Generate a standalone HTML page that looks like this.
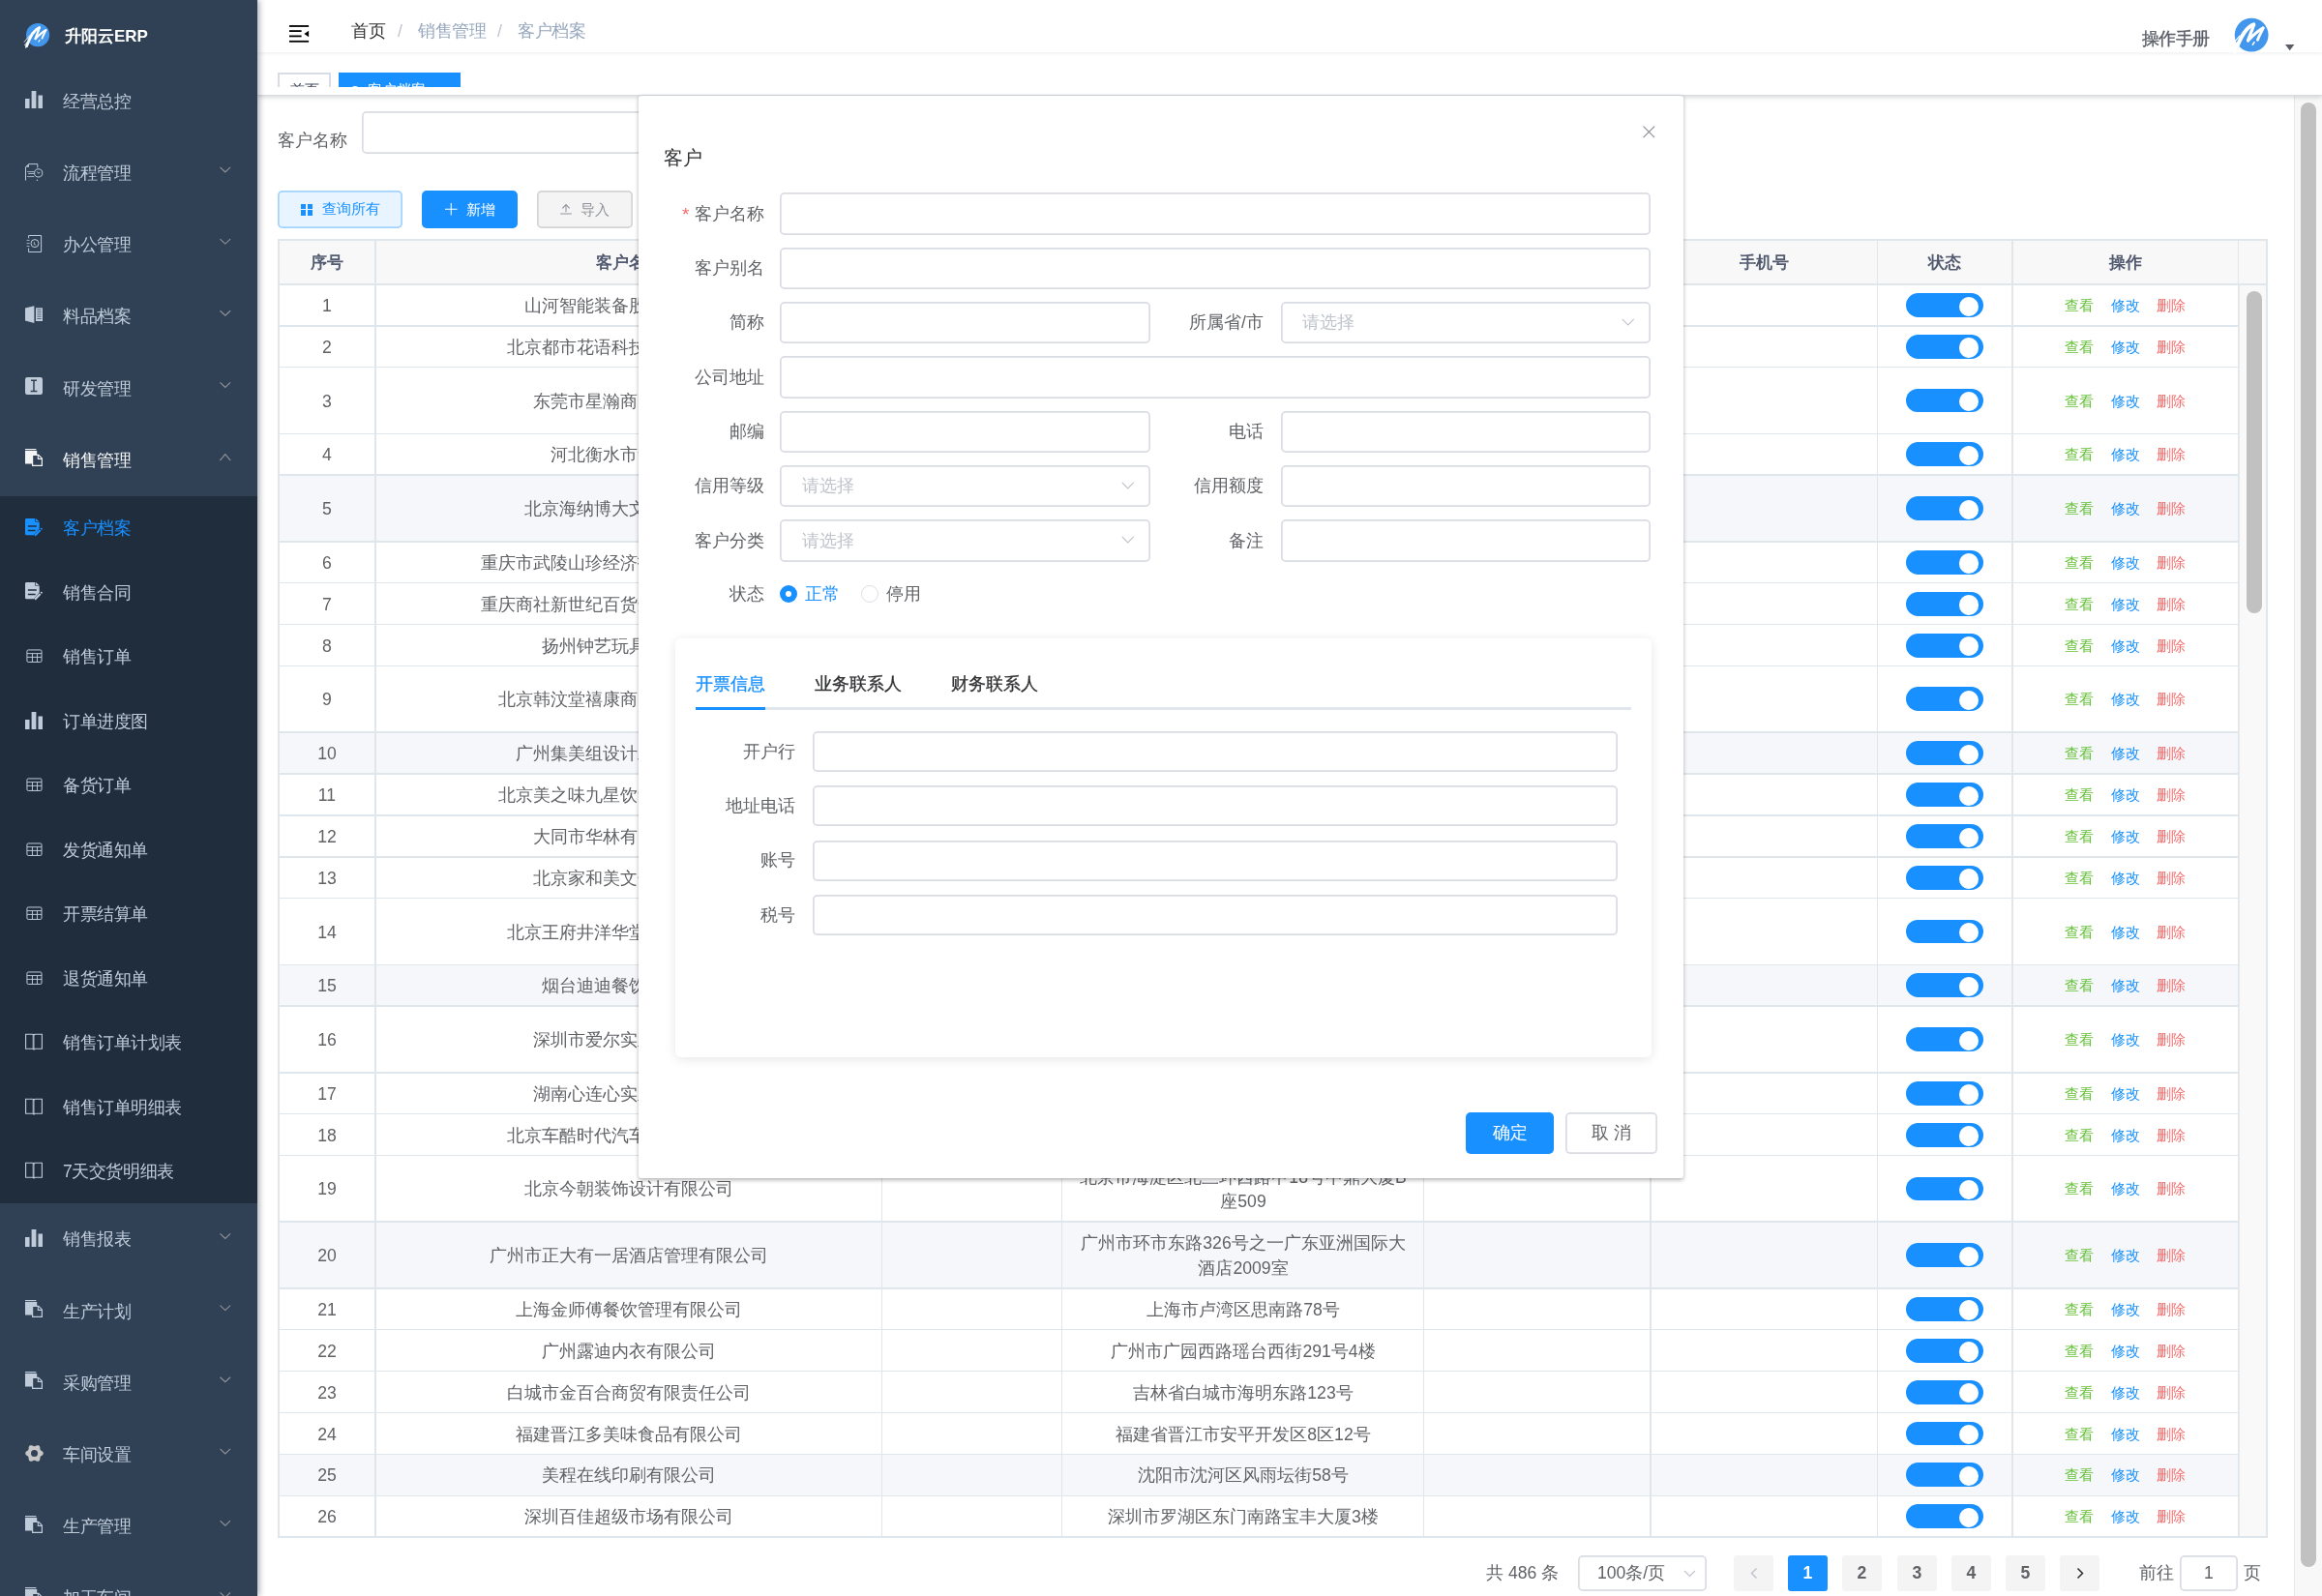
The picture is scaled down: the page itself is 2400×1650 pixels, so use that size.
<!DOCTYPE html><html><head><meta charset="utf-8"><style>
html,body{margin:0;padding:0;width:2400px;height:1650px;overflow:hidden;background:#fff;font-family:"Liberation Sans",sans-serif;}
.t{position:absolute;white-space:nowrap;will-change:transform;}
.b{position:absolute;box-sizing:border-box;}
svg{position:absolute;overflow:visible;}
</style></head><body>

<div class="b" style="left:266.00px;top:0.00px;width:2134.00px;height:1650.00px;background:#fff"></div>
<div class="b" style="left:288.00px;top:248.00px;width:2055.00px;height:45.90px;background:#f8f8f9"></div>
<div class="b" style="left:288.00px;top:491.20px;width:2025.50px;height:68.60px;background:#f5f7fa"></div>
<div class="b" style="left:288.00px;top:757.10px;width:2025.50px;height:42.90px;background:#f5f7fa"></div>
<div class="b" style="left:288.00px;top:997.30px;width:2025.50px;height:42.90px;background:#f5f7fa"></div>
<div class="b" style="left:288.00px;top:1263.20px;width:2025.50px;height:68.60px;background:#f5f7fa"></div>
<div class="b" style="left:288.00px;top:1503.40px;width:2025.50px;height:42.90px;background:#f5f7fa"></div>
<div class="b" style="left:2313.50px;top:293.90px;width:29.50px;height:1295.30px;background:#f9f9f9;border-left:1px solid #e8e8e8"></div>
<div class="b" style="left:2322.00px;top:300.70px;width:16.00px;height:333.00px;background:#c1c1c1;border-radius:8px"></div>
<div class="b" style="left:287.20px;top:247.20px;width:2056.60px;height:1.60px;background:#dfe6ec"></div>
<div class="b" style="left:287.20px;top:293.10px;width:2056.60px;height:1.60px;background:#dfe6ec"></div>
<div class="b" style="left:287.20px;top:336.00px;width:2027.10px;height:1.60px;background:#dfe6ec"></div>
<div class="b" style="left:287.20px;top:378.90px;width:2027.10px;height:1.60px;background:#dfe6ec"></div>
<div class="b" style="left:287.20px;top:447.50px;width:2027.10px;height:1.60px;background:#dfe6ec"></div>
<div class="b" style="left:287.20px;top:490.40px;width:2027.10px;height:1.60px;background:#dfe6ec"></div>
<div class="b" style="left:287.20px;top:559.00px;width:2027.10px;height:1.60px;background:#dfe6ec"></div>
<div class="b" style="left:287.20px;top:601.90px;width:2027.10px;height:1.60px;background:#dfe6ec"></div>
<div class="b" style="left:287.20px;top:644.80px;width:2027.10px;height:1.60px;background:#dfe6ec"></div>
<div class="b" style="left:287.20px;top:687.70px;width:2027.10px;height:1.60px;background:#dfe6ec"></div>
<div class="b" style="left:287.20px;top:756.30px;width:2027.10px;height:1.60px;background:#dfe6ec"></div>
<div class="b" style="left:287.20px;top:799.20px;width:2027.10px;height:1.60px;background:#dfe6ec"></div>
<div class="b" style="left:287.20px;top:842.10px;width:2027.10px;height:1.60px;background:#dfe6ec"></div>
<div class="b" style="left:287.20px;top:885.00px;width:2027.10px;height:1.60px;background:#dfe6ec"></div>
<div class="b" style="left:287.20px;top:927.90px;width:2027.10px;height:1.60px;background:#dfe6ec"></div>
<div class="b" style="left:287.20px;top:996.50px;width:2027.10px;height:1.60px;background:#dfe6ec"></div>
<div class="b" style="left:287.20px;top:1039.40px;width:2027.10px;height:1.60px;background:#dfe6ec"></div>
<div class="b" style="left:287.20px;top:1108.00px;width:2027.10px;height:1.60px;background:#dfe6ec"></div>
<div class="b" style="left:287.20px;top:1150.90px;width:2027.10px;height:1.60px;background:#dfe6ec"></div>
<div class="b" style="left:287.20px;top:1193.80px;width:2027.10px;height:1.60px;background:#dfe6ec"></div>
<div class="b" style="left:287.20px;top:1262.40px;width:2027.10px;height:1.60px;background:#dfe6ec"></div>
<div class="b" style="left:287.20px;top:1331.00px;width:2027.10px;height:1.60px;background:#dfe6ec"></div>
<div class="b" style="left:287.20px;top:1373.90px;width:2027.10px;height:1.60px;background:#dfe6ec"></div>
<div class="b" style="left:287.20px;top:1416.80px;width:2027.10px;height:1.60px;background:#dfe6ec"></div>
<div class="b" style="left:287.20px;top:1459.70px;width:2027.10px;height:1.60px;background:#dfe6ec"></div>
<div class="b" style="left:287.20px;top:1502.60px;width:2027.10px;height:1.60px;background:#dfe6ec"></div>
<div class="b" style="left:287.20px;top:1545.50px;width:2027.10px;height:1.60px;background:#dfe6ec"></div>
<div class="b" style="left:287.20px;top:1588.40px;width:2056.60px;height:1.60px;background:#dfe6ec"></div>
<div class="b" style="left:287.20px;top:247.20px;width:1.60px;height:1342.80px;background:#dfe6ec"></div>
<div class="b" style="left:387.20px;top:247.20px;width:1.60px;height:1342.80px;background:#dfe6ec"></div>
<div class="b" style="left:910.90px;top:247.20px;width:1.60px;height:1342.80px;background:#dfe6ec"></div>
<div class="b" style="left:1096.90px;top:247.20px;width:1.60px;height:1342.80px;background:#dfe6ec"></div>
<div class="b" style="left:1470.50px;top:247.20px;width:1.60px;height:1342.80px;background:#dfe6ec"></div>
<div class="b" style="left:1705.00px;top:247.20px;width:1.60px;height:1342.80px;background:#dfe6ec"></div>
<div class="b" style="left:1939.50px;top:247.20px;width:1.60px;height:1342.80px;background:#dfe6ec"></div>
<div class="b" style="left:2079.20px;top:247.20px;width:1.60px;height:1342.80px;background:#dfe6ec"></div>
<div class="b" style="left:2312.70px;top:247.20px;width:1.60px;height:1342.80px;background:#dfe6ec"></div>
<div class="b" style="left:2342.20px;top:247.20px;width:1.60px;height:1342.80px;background:#dfe6ec"></div>
<div class="t" style="left:288.00px;width:100px;text-align:center;top:255.75px;font-size:17.25px;line-height:30px;color:#515a6e;font-weight:bold;">序号</div>
<div class="t" style="left:449.85px;width:400px;text-align:center;top:255.75px;font-size:17.25px;line-height:30px;color:#515a6e;font-weight:bold;">客户名称</div>
<div class="t" style="left:1723.00px;width:200px;text-align:center;top:255.75px;font-size:17.25px;line-height:30px;color:#515a6e;font-weight:bold;">手机号</div>
<div class="t" style="left:1950.00px;width:120px;text-align:center;top:255.75px;font-size:17.25px;line-height:30px;color:#515a6e;font-weight:bold;">状态</div>
<div class="t" style="left:2096.75px;width:200px;text-align:center;top:255.75px;font-size:17.25px;line-height:30px;color:#515a6e;font-weight:bold;">操作</div>
<div class="t" style="left:288.00px;width:100px;text-align:center;top:300.90px;font-size:17.6px;line-height:30px;color:#606266;font-weight:normal;">1</div>
<div class="t" style="left:389.85px;width:520px;text-align:center;top:300.90px;font-size:17.6px;line-height:30px;color:#606266;font-weight:normal;">山河智能装备股份有限公司</div>
<div class="b" style="left:1970.00px;top:302.95px;width:79.90px;height:24.90px;background:#1890ff;border-radius:13px"></div>
<div class="b" style="left:2024.8px;top:306.55px;width:20.2px;height:20.2px;border-radius:10.1px;background:#fff"></div>
<div class="t" style="left:2134.00px;top:300.90px;font-size:15.25px;line-height:30px;color:#67c23a;font-weight:normal;">查看</div>
<div class="t" style="left:2181.50px;top:300.90px;font-size:15.25px;line-height:30px;color:#1890ff;font-weight:normal;">修改</div>
<div class="t" style="left:2229.00px;top:300.90px;font-size:15.25px;line-height:30px;color:#f56c6c;font-weight:normal;">删除</div>
<div class="t" style="left:288.00px;width:100px;text-align:center;top:343.80px;font-size:17.6px;line-height:30px;color:#606266;font-weight:normal;">2</div>
<div class="t" style="left:389.85px;width:520px;text-align:center;top:343.80px;font-size:17.6px;line-height:30px;color:#606266;font-weight:normal;">北京都市花语科技发展有限公司</div>
<div class="b" style="left:1970.00px;top:345.85px;width:79.90px;height:24.90px;background:#1890ff;border-radius:13px"></div>
<div class="b" style="left:2024.8px;top:349.45px;width:20.2px;height:20.2px;border-radius:10.1px;background:#fff"></div>
<div class="t" style="left:2134.00px;top:343.80px;font-size:15.25px;line-height:30px;color:#67c23a;font-weight:normal;">查看</div>
<div class="t" style="left:2181.50px;top:343.80px;font-size:15.25px;line-height:30px;color:#1890ff;font-weight:normal;">修改</div>
<div class="t" style="left:2229.00px;top:343.80px;font-size:15.25px;line-height:30px;color:#f56c6c;font-weight:normal;">删除</div>
<div class="t" style="left:288.00px;width:100px;text-align:center;top:399.55px;font-size:17.6px;line-height:30px;color:#606266;font-weight:normal;">3</div>
<div class="t" style="left:389.85px;width:520px;text-align:center;top:399.55px;font-size:17.6px;line-height:30px;color:#606266;font-weight:normal;">东莞市星瀚商贸有限公司</div>
<div class="b" style="left:1970.00px;top:401.60px;width:79.90px;height:24.90px;background:#1890ff;border-radius:13px"></div>
<div class="b" style="left:2024.8px;top:405.20px;width:20.2px;height:20.2px;border-radius:10.1px;background:#fff"></div>
<div class="t" style="left:2134.00px;top:399.55px;font-size:15.25px;line-height:30px;color:#67c23a;font-weight:normal;">查看</div>
<div class="t" style="left:2181.50px;top:399.55px;font-size:15.25px;line-height:30px;color:#1890ff;font-weight:normal;">修改</div>
<div class="t" style="left:2229.00px;top:399.55px;font-size:15.25px;line-height:30px;color:#f56c6c;font-weight:normal;">删除</div>
<div class="t" style="left:288.00px;width:100px;text-align:center;top:455.30px;font-size:17.6px;line-height:30px;color:#606266;font-weight:normal;">4</div>
<div class="t" style="left:389.85px;width:520px;text-align:center;top:455.30px;font-size:17.6px;line-height:30px;color:#606266;font-weight:normal;">河北衡水市食品公司</div>
<div class="b" style="left:1970.00px;top:457.35px;width:79.90px;height:24.90px;background:#1890ff;border-radius:13px"></div>
<div class="b" style="left:2024.8px;top:460.95px;width:20.2px;height:20.2px;border-radius:10.1px;background:#fff"></div>
<div class="t" style="left:2134.00px;top:455.30px;font-size:15.25px;line-height:30px;color:#67c23a;font-weight:normal;">查看</div>
<div class="t" style="left:2181.50px;top:455.30px;font-size:15.25px;line-height:30px;color:#1890ff;font-weight:normal;">修改</div>
<div class="t" style="left:2229.00px;top:455.30px;font-size:15.25px;line-height:30px;color:#f56c6c;font-weight:normal;">删除</div>
<div class="t" style="left:288.00px;width:100px;text-align:center;top:511.05px;font-size:17.6px;line-height:30px;color:#606266;font-weight:normal;">5</div>
<div class="t" style="left:389.85px;width:520px;text-align:center;top:511.05px;font-size:17.6px;line-height:30px;color:#606266;font-weight:normal;">北京海纳博大文化有限公司</div>
<div class="b" style="left:1970.00px;top:513.10px;width:79.90px;height:24.90px;background:#1890ff;border-radius:13px"></div>
<div class="b" style="left:2024.8px;top:516.70px;width:20.2px;height:20.2px;border-radius:10.1px;background:#fff"></div>
<div class="t" style="left:2134.00px;top:511.05px;font-size:15.25px;line-height:30px;color:#67c23a;font-weight:normal;">查看</div>
<div class="t" style="left:2181.50px;top:511.05px;font-size:15.25px;line-height:30px;color:#1890ff;font-weight:normal;">修改</div>
<div class="t" style="left:2229.00px;top:511.05px;font-size:15.25px;line-height:30px;color:#f56c6c;font-weight:normal;">删除</div>
<div class="t" style="left:288.00px;width:100px;text-align:center;top:566.80px;font-size:17.6px;line-height:30px;color:#606266;font-weight:normal;">6</div>
<div class="t" style="left:389.85px;width:520px;text-align:center;top:566.80px;font-size:17.6px;line-height:30px;color:#606266;font-weight:normal;">重庆市武陵山珍经济技术开发有限公司</div>
<div class="b" style="left:1970.00px;top:568.85px;width:79.90px;height:24.90px;background:#1890ff;border-radius:13px"></div>
<div class="b" style="left:2024.8px;top:572.45px;width:20.2px;height:20.2px;border-radius:10.1px;background:#fff"></div>
<div class="t" style="left:2134.00px;top:566.80px;font-size:15.25px;line-height:30px;color:#67c23a;font-weight:normal;">查看</div>
<div class="t" style="left:2181.50px;top:566.80px;font-size:15.25px;line-height:30px;color:#1890ff;font-weight:normal;">修改</div>
<div class="t" style="left:2229.00px;top:566.80px;font-size:15.25px;line-height:30px;color:#f56c6c;font-weight:normal;">删除</div>
<div class="t" style="left:288.00px;width:100px;text-align:center;top:609.70px;font-size:17.6px;line-height:30px;color:#606266;font-weight:normal;">7</div>
<div class="t" style="left:389.85px;width:520px;text-align:center;top:609.70px;font-size:17.6px;line-height:30px;color:#606266;font-weight:normal;">重庆商社新世纪百货连锁经营有限公司</div>
<div class="b" style="left:1970.00px;top:611.75px;width:79.90px;height:24.90px;background:#1890ff;border-radius:13px"></div>
<div class="b" style="left:2024.8px;top:615.35px;width:20.2px;height:20.2px;border-radius:10.1px;background:#fff"></div>
<div class="t" style="left:2134.00px;top:609.70px;font-size:15.25px;line-height:30px;color:#67c23a;font-weight:normal;">查看</div>
<div class="t" style="left:2181.50px;top:609.70px;font-size:15.25px;line-height:30px;color:#1890ff;font-weight:normal;">修改</div>
<div class="t" style="left:2229.00px;top:609.70px;font-size:15.25px;line-height:30px;color:#f56c6c;font-weight:normal;">删除</div>
<div class="t" style="left:288.00px;width:100px;text-align:center;top:652.60px;font-size:17.6px;line-height:30px;color:#606266;font-weight:normal;">8</div>
<div class="t" style="left:389.85px;width:520px;text-align:center;top:652.60px;font-size:17.6px;line-height:30px;color:#606266;font-weight:normal;">扬州钟艺玩具有限公司</div>
<div class="b" style="left:1970.00px;top:654.65px;width:79.90px;height:24.90px;background:#1890ff;border-radius:13px"></div>
<div class="b" style="left:2024.8px;top:658.25px;width:20.2px;height:20.2px;border-radius:10.1px;background:#fff"></div>
<div class="t" style="left:2134.00px;top:652.60px;font-size:15.25px;line-height:30px;color:#67c23a;font-weight:normal;">查看</div>
<div class="t" style="left:2181.50px;top:652.60px;font-size:15.25px;line-height:30px;color:#1890ff;font-weight:normal;">修改</div>
<div class="t" style="left:2229.00px;top:652.60px;font-size:15.25px;line-height:30px;color:#f56c6c;font-weight:normal;">删除</div>
<div class="t" style="left:288.00px;width:100px;text-align:center;top:708.35px;font-size:17.6px;line-height:30px;color:#606266;font-weight:normal;">9</div>
<div class="t" style="left:389.85px;width:520px;text-align:center;top:708.35px;font-size:17.6px;line-height:30px;color:#606266;font-weight:normal;">北京韩汶堂禧康商贸中心有限公司</div>
<div class="b" style="left:1970.00px;top:710.40px;width:79.90px;height:24.90px;background:#1890ff;border-radius:13px"></div>
<div class="b" style="left:2024.8px;top:714.00px;width:20.2px;height:20.2px;border-radius:10.1px;background:#fff"></div>
<div class="t" style="left:2134.00px;top:708.35px;font-size:15.25px;line-height:30px;color:#67c23a;font-weight:normal;">查看</div>
<div class="t" style="left:2181.50px;top:708.35px;font-size:15.25px;line-height:30px;color:#1890ff;font-weight:normal;">修改</div>
<div class="t" style="left:2229.00px;top:708.35px;font-size:15.25px;line-height:30px;color:#f56c6c;font-weight:normal;">删除</div>
<div class="t" style="left:288.00px;width:100px;text-align:center;top:764.10px;font-size:17.6px;line-height:30px;color:#606266;font-weight:normal;">10</div>
<div class="t" style="left:389.85px;width:520px;text-align:center;top:764.10px;font-size:17.6px;line-height:30px;color:#606266;font-weight:normal;">广州集美组设计工程有限公司</div>
<div class="b" style="left:1970.00px;top:766.15px;width:79.90px;height:24.90px;background:#1890ff;border-radius:13px"></div>
<div class="b" style="left:2024.8px;top:769.75px;width:20.2px;height:20.2px;border-radius:10.1px;background:#fff"></div>
<div class="t" style="left:2134.00px;top:764.10px;font-size:15.25px;line-height:30px;color:#67c23a;font-weight:normal;">查看</div>
<div class="t" style="left:2181.50px;top:764.10px;font-size:15.25px;line-height:30px;color:#1890ff;font-weight:normal;">修改</div>
<div class="t" style="left:2229.00px;top:764.10px;font-size:15.25px;line-height:30px;color:#f56c6c;font-weight:normal;">删除</div>
<div class="t" style="left:288.00px;width:100px;text-align:center;top:807.00px;font-size:17.6px;line-height:30px;color:#606266;font-weight:normal;">11</div>
<div class="t" style="left:389.85px;width:520px;text-align:center;top:807.00px;font-size:17.6px;line-height:30px;color:#606266;font-weight:normal;">北京美之味九星饮食管理有限公司</div>
<div class="b" style="left:1970.00px;top:809.05px;width:79.90px;height:24.90px;background:#1890ff;border-radius:13px"></div>
<div class="b" style="left:2024.8px;top:812.65px;width:20.2px;height:20.2px;border-radius:10.1px;background:#fff"></div>
<div class="t" style="left:2134.00px;top:807.00px;font-size:15.25px;line-height:30px;color:#67c23a;font-weight:normal;">查看</div>
<div class="t" style="left:2181.50px;top:807.00px;font-size:15.25px;line-height:30px;color:#1890ff;font-weight:normal;">修改</div>
<div class="t" style="left:2229.00px;top:807.00px;font-size:15.25px;line-height:30px;color:#f56c6c;font-weight:normal;">删除</div>
<div class="t" style="left:288.00px;width:100px;text-align:center;top:849.90px;font-size:17.6px;line-height:30px;color:#606266;font-weight:normal;">12</div>
<div class="t" style="left:389.85px;width:520px;text-align:center;top:849.90px;font-size:17.6px;line-height:30px;color:#606266;font-weight:normal;">大同市华林有限责任公司</div>
<div class="b" style="left:1970.00px;top:851.95px;width:79.90px;height:24.90px;background:#1890ff;border-radius:13px"></div>
<div class="b" style="left:2024.8px;top:855.55px;width:20.2px;height:20.2px;border-radius:10.1px;background:#fff"></div>
<div class="t" style="left:2134.00px;top:849.90px;font-size:15.25px;line-height:30px;color:#67c23a;font-weight:normal;">查看</div>
<div class="t" style="left:2181.50px;top:849.90px;font-size:15.25px;line-height:30px;color:#1890ff;font-weight:normal;">修改</div>
<div class="t" style="left:2229.00px;top:849.90px;font-size:15.25px;line-height:30px;color:#f56c6c;font-weight:normal;">删除</div>
<div class="t" style="left:288.00px;width:100px;text-align:center;top:892.80px;font-size:17.6px;line-height:30px;color:#606266;font-weight:normal;">13</div>
<div class="t" style="left:389.85px;width:520px;text-align:center;top:892.80px;font-size:17.6px;line-height:30px;color:#606266;font-weight:normal;">北京家和美文化有限公司</div>
<div class="b" style="left:1970.00px;top:894.85px;width:79.90px;height:24.90px;background:#1890ff;border-radius:13px"></div>
<div class="b" style="left:2024.8px;top:898.45px;width:20.2px;height:20.2px;border-radius:10.1px;background:#fff"></div>
<div class="t" style="left:2134.00px;top:892.80px;font-size:15.25px;line-height:30px;color:#67c23a;font-weight:normal;">查看</div>
<div class="t" style="left:2181.50px;top:892.80px;font-size:15.25px;line-height:30px;color:#1890ff;font-weight:normal;">修改</div>
<div class="t" style="left:2229.00px;top:892.80px;font-size:15.25px;line-height:30px;color:#f56c6c;font-weight:normal;">删除</div>
<div class="t" style="left:288.00px;width:100px;text-align:center;top:948.55px;font-size:17.6px;line-height:30px;color:#606266;font-weight:normal;">14</div>
<div class="t" style="left:389.85px;width:520px;text-align:center;top:948.55px;font-size:17.6px;line-height:30px;color:#606266;font-weight:normal;">北京王府井洋华堂商业有限公司</div>
<div class="b" style="left:1970.00px;top:950.60px;width:79.90px;height:24.90px;background:#1890ff;border-radius:13px"></div>
<div class="b" style="left:2024.8px;top:954.20px;width:20.2px;height:20.2px;border-radius:10.1px;background:#fff"></div>
<div class="t" style="left:2134.00px;top:948.55px;font-size:15.25px;line-height:30px;color:#67c23a;font-weight:normal;">查看</div>
<div class="t" style="left:2181.50px;top:948.55px;font-size:15.25px;line-height:30px;color:#1890ff;font-weight:normal;">修改</div>
<div class="t" style="left:2229.00px;top:948.55px;font-size:15.25px;line-height:30px;color:#f56c6c;font-weight:normal;">删除</div>
<div class="t" style="left:288.00px;width:100px;text-align:center;top:1004.30px;font-size:17.6px;line-height:30px;color:#606266;font-weight:normal;">15</div>
<div class="t" style="left:389.85px;width:520px;text-align:center;top:1004.30px;font-size:17.6px;line-height:30px;color:#606266;font-weight:normal;">烟台迪迪餐饮有限公司</div>
<div class="b" style="left:1970.00px;top:1006.35px;width:79.90px;height:24.90px;background:#1890ff;border-radius:13px"></div>
<div class="b" style="left:2024.8px;top:1009.95px;width:20.2px;height:20.2px;border-radius:10.1px;background:#fff"></div>
<div class="t" style="left:2134.00px;top:1004.30px;font-size:15.25px;line-height:30px;color:#67c23a;font-weight:normal;">查看</div>
<div class="t" style="left:2181.50px;top:1004.30px;font-size:15.25px;line-height:30px;color:#1890ff;font-weight:normal;">修改</div>
<div class="t" style="left:2229.00px;top:1004.30px;font-size:15.25px;line-height:30px;color:#f56c6c;font-weight:normal;">删除</div>
<div class="t" style="left:288.00px;width:100px;text-align:center;top:1060.05px;font-size:17.6px;line-height:30px;color:#606266;font-weight:normal;">16</div>
<div class="t" style="left:389.85px;width:520px;text-align:center;top:1060.05px;font-size:17.6px;line-height:30px;color:#606266;font-weight:normal;">深圳市爱尔实业有限公司</div>
<div class="b" style="left:1970.00px;top:1062.10px;width:79.90px;height:24.90px;background:#1890ff;border-radius:13px"></div>
<div class="b" style="left:2024.8px;top:1065.70px;width:20.2px;height:20.2px;border-radius:10.1px;background:#fff"></div>
<div class="t" style="left:2134.00px;top:1060.05px;font-size:15.25px;line-height:30px;color:#67c23a;font-weight:normal;">查看</div>
<div class="t" style="left:2181.50px;top:1060.05px;font-size:15.25px;line-height:30px;color:#1890ff;font-weight:normal;">修改</div>
<div class="t" style="left:2229.00px;top:1060.05px;font-size:15.25px;line-height:30px;color:#f56c6c;font-weight:normal;">删除</div>
<div class="t" style="left:288.00px;width:100px;text-align:center;top:1115.80px;font-size:17.6px;line-height:30px;color:#606266;font-weight:normal;">17</div>
<div class="t" style="left:389.85px;width:520px;text-align:center;top:1115.80px;font-size:17.6px;line-height:30px;color:#606266;font-weight:normal;">湖南心连心实业有限公司</div>
<div class="b" style="left:1970.00px;top:1117.85px;width:79.90px;height:24.90px;background:#1890ff;border-radius:13px"></div>
<div class="b" style="left:2024.8px;top:1121.45px;width:20.2px;height:20.2px;border-radius:10.1px;background:#fff"></div>
<div class="t" style="left:2134.00px;top:1115.80px;font-size:15.25px;line-height:30px;color:#67c23a;font-weight:normal;">查看</div>
<div class="t" style="left:2181.50px;top:1115.80px;font-size:15.25px;line-height:30px;color:#1890ff;font-weight:normal;">修改</div>
<div class="t" style="left:2229.00px;top:1115.80px;font-size:15.25px;line-height:30px;color:#f56c6c;font-weight:normal;">删除</div>
<div class="t" style="left:288.00px;width:100px;text-align:center;top:1158.70px;font-size:17.6px;line-height:30px;color:#606266;font-weight:normal;">18</div>
<div class="t" style="left:389.85px;width:520px;text-align:center;top:1158.70px;font-size:17.6px;line-height:30px;color:#606266;font-weight:normal;">北京车酷时代汽车服务有限公司</div>
<div class="b" style="left:1970.00px;top:1160.75px;width:79.90px;height:24.90px;background:#1890ff;border-radius:13px"></div>
<div class="b" style="left:2024.8px;top:1164.35px;width:20.2px;height:20.2px;border-radius:10.1px;background:#fff"></div>
<div class="t" style="left:2134.00px;top:1158.70px;font-size:15.25px;line-height:30px;color:#67c23a;font-weight:normal;">查看</div>
<div class="t" style="left:2181.50px;top:1158.70px;font-size:15.25px;line-height:30px;color:#1890ff;font-weight:normal;">修改</div>
<div class="t" style="left:2229.00px;top:1158.70px;font-size:15.25px;line-height:30px;color:#f56c6c;font-weight:normal;">删除</div>
<div class="t" style="left:288.00px;width:100px;text-align:center;top:1214.45px;font-size:17.6px;line-height:30px;color:#606266;font-weight:normal;">19</div>
<div class="t" style="left:389.85px;width:520px;text-align:center;top:1214.45px;font-size:17.6px;line-height:30px;color:#606266;font-weight:normal;">北京今朝装饰设计有限公司</div>
<div class="t" style="left:1099.50px;width:370px;text-align:center;top:1201.75px;font-size:17.6px;line-height:30px;color:#606266;font-weight:normal;">北京市海淀区北三环西路甲18号中鼎大厦B</div>
<div class="t" style="left:1099.50px;width:370px;text-align:center;top:1227.15px;font-size:17.6px;line-height:30px;color:#606266;font-weight:normal;">座509</div>
<div class="b" style="left:1970.00px;top:1216.50px;width:79.90px;height:24.90px;background:#1890ff;border-radius:13px"></div>
<div class="b" style="left:2024.8px;top:1220.10px;width:20.2px;height:20.2px;border-radius:10.1px;background:#fff"></div>
<div class="t" style="left:2134.00px;top:1214.45px;font-size:15.25px;line-height:30px;color:#67c23a;font-weight:normal;">查看</div>
<div class="t" style="left:2181.50px;top:1214.45px;font-size:15.25px;line-height:30px;color:#1890ff;font-weight:normal;">修改</div>
<div class="t" style="left:2229.00px;top:1214.45px;font-size:15.25px;line-height:30px;color:#f56c6c;font-weight:normal;">删除</div>
<div class="t" style="left:288.00px;width:100px;text-align:center;top:1283.05px;font-size:17.6px;line-height:30px;color:#606266;font-weight:normal;">20</div>
<div class="t" style="left:389.85px;width:520px;text-align:center;top:1283.05px;font-size:17.6px;line-height:30px;color:#606266;font-weight:normal;">广州市正大有一居酒店管理有限公司</div>
<div class="t" style="left:1099.50px;width:370px;text-align:center;top:1270.35px;font-size:17.6px;line-height:30px;color:#606266;font-weight:normal;">广州市环市东路326号之一广东亚洲国际大</div>
<div class="t" style="left:1099.50px;width:370px;text-align:center;top:1295.75px;font-size:17.6px;line-height:30px;color:#606266;font-weight:normal;">酒店2009室</div>
<div class="b" style="left:1970.00px;top:1285.10px;width:79.90px;height:24.90px;background:#1890ff;border-radius:13px"></div>
<div class="b" style="left:2024.8px;top:1288.70px;width:20.2px;height:20.2px;border-radius:10.1px;background:#fff"></div>
<div class="t" style="left:2134.00px;top:1283.05px;font-size:15.25px;line-height:30px;color:#67c23a;font-weight:normal;">查看</div>
<div class="t" style="left:2181.50px;top:1283.05px;font-size:15.25px;line-height:30px;color:#1890ff;font-weight:normal;">修改</div>
<div class="t" style="left:2229.00px;top:1283.05px;font-size:15.25px;line-height:30px;color:#f56c6c;font-weight:normal;">删除</div>
<div class="t" style="left:288.00px;width:100px;text-align:center;top:1338.80px;font-size:17.6px;line-height:30px;color:#606266;font-weight:normal;">21</div>
<div class="t" style="left:389.85px;width:520px;text-align:center;top:1338.80px;font-size:17.6px;line-height:30px;color:#606266;font-weight:normal;">上海金师傅餐饮管理有限公司</div>
<div class="t" style="left:1099.50px;width:370px;text-align:center;top:1338.80px;font-size:17.6px;line-height:30px;color:#606266;font-weight:normal;">上海市卢湾区思南路78号</div>
<div class="b" style="left:1970.00px;top:1340.85px;width:79.90px;height:24.90px;background:#1890ff;border-radius:13px"></div>
<div class="b" style="left:2024.8px;top:1344.45px;width:20.2px;height:20.2px;border-radius:10.1px;background:#fff"></div>
<div class="t" style="left:2134.00px;top:1338.80px;font-size:15.25px;line-height:30px;color:#67c23a;font-weight:normal;">查看</div>
<div class="t" style="left:2181.50px;top:1338.80px;font-size:15.25px;line-height:30px;color:#1890ff;font-weight:normal;">修改</div>
<div class="t" style="left:2229.00px;top:1338.80px;font-size:15.25px;line-height:30px;color:#f56c6c;font-weight:normal;">删除</div>
<div class="t" style="left:288.00px;width:100px;text-align:center;top:1381.70px;font-size:17.6px;line-height:30px;color:#606266;font-weight:normal;">22</div>
<div class="t" style="left:389.85px;width:520px;text-align:center;top:1381.70px;font-size:17.6px;line-height:30px;color:#606266;font-weight:normal;">广州露迪内衣有限公司</div>
<div class="t" style="left:1099.50px;width:370px;text-align:center;top:1381.70px;font-size:17.6px;line-height:30px;color:#606266;font-weight:normal;">广州市广园西路瑶台西街291号4楼</div>
<div class="b" style="left:1970.00px;top:1383.75px;width:79.90px;height:24.90px;background:#1890ff;border-radius:13px"></div>
<div class="b" style="left:2024.8px;top:1387.35px;width:20.2px;height:20.2px;border-radius:10.1px;background:#fff"></div>
<div class="t" style="left:2134.00px;top:1381.70px;font-size:15.25px;line-height:30px;color:#67c23a;font-weight:normal;">查看</div>
<div class="t" style="left:2181.50px;top:1381.70px;font-size:15.25px;line-height:30px;color:#1890ff;font-weight:normal;">修改</div>
<div class="t" style="left:2229.00px;top:1381.70px;font-size:15.25px;line-height:30px;color:#f56c6c;font-weight:normal;">删除</div>
<div class="t" style="left:288.00px;width:100px;text-align:center;top:1424.60px;font-size:17.6px;line-height:30px;color:#606266;font-weight:normal;">23</div>
<div class="t" style="left:389.85px;width:520px;text-align:center;top:1424.60px;font-size:17.6px;line-height:30px;color:#606266;font-weight:normal;">白城市金百合商贸有限责任公司</div>
<div class="t" style="left:1099.50px;width:370px;text-align:center;top:1424.60px;font-size:17.6px;line-height:30px;color:#606266;font-weight:normal;">吉林省白城市海明东路123号</div>
<div class="b" style="left:1970.00px;top:1426.65px;width:79.90px;height:24.90px;background:#1890ff;border-radius:13px"></div>
<div class="b" style="left:2024.8px;top:1430.25px;width:20.2px;height:20.2px;border-radius:10.1px;background:#fff"></div>
<div class="t" style="left:2134.00px;top:1424.60px;font-size:15.25px;line-height:30px;color:#67c23a;font-weight:normal;">查看</div>
<div class="t" style="left:2181.50px;top:1424.60px;font-size:15.25px;line-height:30px;color:#1890ff;font-weight:normal;">修改</div>
<div class="t" style="left:2229.00px;top:1424.60px;font-size:15.25px;line-height:30px;color:#f56c6c;font-weight:normal;">删除</div>
<div class="t" style="left:288.00px;width:100px;text-align:center;top:1467.50px;font-size:17.6px;line-height:30px;color:#606266;font-weight:normal;">24</div>
<div class="t" style="left:389.85px;width:520px;text-align:center;top:1467.50px;font-size:17.6px;line-height:30px;color:#606266;font-weight:normal;">福建晋江多美味食品有限公司</div>
<div class="t" style="left:1099.50px;width:370px;text-align:center;top:1467.50px;font-size:17.6px;line-height:30px;color:#606266;font-weight:normal;">福建省晋江市安平开发区8区12号</div>
<div class="b" style="left:1970.00px;top:1469.55px;width:79.90px;height:24.90px;background:#1890ff;border-radius:13px"></div>
<div class="b" style="left:2024.8px;top:1473.15px;width:20.2px;height:20.2px;border-radius:10.1px;background:#fff"></div>
<div class="t" style="left:2134.00px;top:1467.50px;font-size:15.25px;line-height:30px;color:#67c23a;font-weight:normal;">查看</div>
<div class="t" style="left:2181.50px;top:1467.50px;font-size:15.25px;line-height:30px;color:#1890ff;font-weight:normal;">修改</div>
<div class="t" style="left:2229.00px;top:1467.50px;font-size:15.25px;line-height:30px;color:#f56c6c;font-weight:normal;">删除</div>
<div class="t" style="left:288.00px;width:100px;text-align:center;top:1510.40px;font-size:17.6px;line-height:30px;color:#606266;font-weight:normal;">25</div>
<div class="t" style="left:389.85px;width:520px;text-align:center;top:1510.40px;font-size:17.6px;line-height:30px;color:#606266;font-weight:normal;">美程在线印刷有限公司</div>
<div class="t" style="left:1099.50px;width:370px;text-align:center;top:1510.40px;font-size:17.6px;line-height:30px;color:#606266;font-weight:normal;">沈阳市沈河区风雨坛街58号</div>
<div class="b" style="left:1970.00px;top:1512.45px;width:79.90px;height:24.90px;background:#1890ff;border-radius:13px"></div>
<div class="b" style="left:2024.8px;top:1516.05px;width:20.2px;height:20.2px;border-radius:10.1px;background:#fff"></div>
<div class="t" style="left:2134.00px;top:1510.40px;font-size:15.25px;line-height:30px;color:#67c23a;font-weight:normal;">查看</div>
<div class="t" style="left:2181.50px;top:1510.40px;font-size:15.25px;line-height:30px;color:#1890ff;font-weight:normal;">修改</div>
<div class="t" style="left:2229.00px;top:1510.40px;font-size:15.25px;line-height:30px;color:#f56c6c;font-weight:normal;">删除</div>
<div class="t" style="left:288.00px;width:100px;text-align:center;top:1553.30px;font-size:17.6px;line-height:30px;color:#606266;font-weight:normal;">26</div>
<div class="t" style="left:389.85px;width:520px;text-align:center;top:1553.30px;font-size:17.6px;line-height:30px;color:#606266;font-weight:normal;">深圳百佳超级市场有限公司</div>
<div class="t" style="left:1099.50px;width:370px;text-align:center;top:1553.30px;font-size:17.6px;line-height:30px;color:#606266;font-weight:normal;">深圳市罗湖区东门南路宝丰大厦3楼</div>
<div class="b" style="left:1970.00px;top:1555.35px;width:79.90px;height:24.90px;background:#1890ff;border-radius:13px"></div>
<div class="b" style="left:2024.8px;top:1558.95px;width:20.2px;height:20.2px;border-radius:10.1px;background:#fff"></div>
<div class="t" style="left:2134.00px;top:1553.30px;font-size:15.25px;line-height:30px;color:#67c23a;font-weight:normal;">查看</div>
<div class="t" style="left:2181.50px;top:1553.30px;font-size:15.25px;line-height:30px;color:#1890ff;font-weight:normal;">修改</div>
<div class="t" style="left:2229.00px;top:1553.30px;font-size:15.25px;line-height:30px;color:#f56c6c;font-weight:normal;">删除</div>
<div class="t" style="left:287.40px;top:129.65px;font-size:17.6px;line-height:30px;color:#606266;font-weight:normal;">客户名称</div>
<div class="b" style="left:374.30px;top:115.00px;width:325.70px;height:43.50px;box-shadow:inset 0 0 0 1.7px #d9dce3;border-radius:5px;background:#fff"></div>
<div class="b" style="left:287.40px;top:197.30px;width:128.30px;height:39.20px;background:#e8f4ff;box-shadow:inset 0 0 0 1.7px #a3d3ff;border-radius:5px"></div>
<div class="b" style="left:310.90px;top:210.70px;width:5.40px;height:5.40px;background:#1890ff"></div>
<div class="b" style="left:317.60px;top:210.70px;width:5.40px;height:5.40px;background:#1890ff"></div>
<div class="b" style="left:310.90px;top:217.30px;width:5.40px;height:5.40px;background:#1890ff"></div>
<div class="b" style="left:317.60px;top:217.30px;width:5.40px;height:5.40px;background:#1890ff"></div>
<div class="t" style="left:332.80px;top:201.05px;font-size:15px;line-height:30px;color:#1890ff;font-weight:normal;">查询所有</div>
<div class="b" style="left:436.20px;top:197.30px;width:98.60px;height:39.20px;background:#1890ff;border-radius:5px"></div>
<svg style="left:459.8px;top:209.9px" width="13" height="13"><path d="M6.25 0V12.6M0 6.3H12.5" stroke="#fff" stroke-width="1.05"/></svg>
<div class="t" style="left:482.20px;top:201.75px;font-size:15px;line-height:30px;color:#fff;font-weight:normal;">新增</div>
<div class="b" style="left:555.20px;top:197.30px;width:98.40px;height:39.20px;background:#f4f4f5;box-shadow:inset 0 0 0 1.7px #d3d4d6;border-radius:5px"></div>
<svg style="left:578.8px;top:210.4px" width="13" height="13"><path d="M0.2 10.9H11.8M6 1.6V9.2M2.3 5.4L6 1.6L9.7 5.4" stroke="#909399" stroke-width="1.05" fill="none"/></svg>
<div class="t" style="left:600.40px;top:201.75px;font-size:15px;line-height:30px;color:#909399;font-weight:normal;">导入</div>
<div class="t" style="left:1535.70px;top:1611.45px;font-size:17.6px;line-height:30px;color:#606266;font-weight:normal;">共 486 条</div>
<div class="b" style="left:1630.60px;top:1608.40px;width:133.00px;height:36.90px;box-shadow:inset 0 0 0 1.7px #d9dce3;border-radius:5px;background:#fff"></div>
<div class="t" style="left:1651.00px;top:1611.45px;font-size:17.6px;line-height:30px;color:#606266;font-weight:normal;">100条/页</div>
<svg style="left:1740px;top:1623px" width="14" height="8"><path d="M1 1L6.5 6.5L12 1" stroke="#c0c4cc" stroke-width="1.2" fill="none"/></svg>
<div class="b" style="left:1791.90px;top:1607.70px;width:41.00px;height:37.60px;background:#f4f4f5;border-radius:3px"></div>
<div class="b" style="left:1848.00px;top:1607.70px;width:41.00px;height:37.60px;background:#1890ff;border-radius:3px"></div>
<div class="b" style="left:1904.30px;top:1607.70px;width:41.00px;height:37.60px;background:#f4f4f5;border-radius:3px"></div>
<div class="b" style="left:1960.50px;top:1607.70px;width:41.00px;height:37.60px;background:#f4f4f5;border-radius:3px"></div>
<div class="b" style="left:2016.70px;top:1607.70px;width:41.00px;height:37.60px;background:#f4f4f5;border-radius:3px"></div>
<div class="b" style="left:2072.90px;top:1607.70px;width:41.00px;height:37.60px;background:#f4f4f5;border-radius:3px"></div>
<div class="b" style="left:2128.70px;top:1607.70px;width:41.00px;height:37.60px;background:#f4f4f5;border-radius:3px"></div>
<div class="t" style="left:1848.00px;width:41px;text-align:center;top:1611.25px;font-size:17.6px;line-height:30px;color:#fff;font-weight:bold;">1</div>
<div class="t" style="left:1904.30px;width:41px;text-align:center;top:1611.25px;font-size:17.6px;line-height:30px;color:#606266;font-weight:bold;">2</div>
<div class="t" style="left:1960.50px;width:41px;text-align:center;top:1611.25px;font-size:17.6px;line-height:30px;color:#606266;font-weight:bold;">3</div>
<div class="t" style="left:2016.70px;width:41px;text-align:center;top:1611.25px;font-size:17.6px;line-height:30px;color:#606266;font-weight:bold;">4</div>
<div class="t" style="left:2072.90px;width:41px;text-align:center;top:1611.25px;font-size:17.6px;line-height:30px;color:#606266;font-weight:bold;">5</div>
<svg style="left:1808px;top:1620px" width="10" height="14"><path d="M7.5 1.5L2.5 6.5L7.5 11.5" stroke="#c0c4cc" stroke-width="1.5" fill="none"/></svg>
<svg style="left:2145px;top:1620px" width="10" height="14"><path d="M2.5 1.5L7.5 6.5L2.5 11.5" stroke="#303133" stroke-width="1.5" fill="none"/></svg>
<div class="t" style="left:2211.20px;top:1611.45px;font-size:17.6px;line-height:30px;color:#606266;font-weight:normal;">前往</div>
<div class="b" style="left:2252.70px;top:1608.00px;width:60.50px;height:37.00px;box-shadow:inset 0 0 0 1.7px #d9dce3;border-radius:5px;background:#fff"></div>
<div class="t" style="left:2253.00px;width:60px;text-align:center;top:1611.45px;font-size:17.6px;line-height:30px;color:#606266;font-weight:normal;">1</div>
<div class="t" style="left:2318.60px;top:1611.45px;font-size:17.6px;line-height:30px;color:#606266;font-weight:normal;">页</div>
<div class="b" style="left:2370.50px;top:98.70px;width:29.50px;height:1551.30px;background:#f8f8f8;border-left:1px solid #e8e8e8"></div>
<div class="b" style="left:2378.00px;top:106.00px;width:16.00px;height:1514.00px;background:#c1c1c1;border-radius:8px"></div>
<div class="b" style="left:266.00px;top:54.00px;width:2134.00px;height:45.40px;background:#fff;box-shadow:0 2px 5px 0 rgba(0,0,0,.13),0 0 4px 0 rgba(0,0,0,.04)"></div>
<div class="b" style="left:266.00px;top:97.80px;width:2134.00px;height:1.60px;background:#d8dce5"></div>
<div class="b" style="left:266px;top:54px;width:2134px;height:35.9px;overflow:hidden">
<div class="b" style="left:21.4px;top:21.2px;width:54.4px;height:45px;border:2px solid #d8dce5;background:#fff"></div>
<div class="t" style="left:33.9px;top:24px;font-size:15px;line-height:30px;color:#495060">首页</div>
<div class="b" style="left:84.1px;top:21.2px;width:125.8px;height:45px;background:#1890ff"></div>
<div class="b" style="left:97.2px;top:35px;width:8px;height:8px;border-radius:4px;background:#fff"></div>
<div class="t" style="left:114px;top:24px;font-size:15px;line-height:30px;color:#fff">客户档案</div>
</div>
<div class="b" style="left:266.00px;top:0.00px;width:2134.00px;height:54.00px;background:#fff;box-shadow:0 1px 4px rgba(0,21,41,.08)"></div>
<svg style="left:298.7px;top:26px" width="21" height="18"><rect x="0" y="0.1" width="20.1" height="1.8" fill="#000"/><rect x="0" y="5.2" width="12.6" height="1.8" fill="#000"/><rect x="0" y="10.5" width="12.6" height="1.8" fill="#000"/><rect x="0" y="15.9" width="20.1" height="1.8" fill="#000"/><path d="M15.4 9.0L20.1 5.8V12.2Z" fill="#000"/></svg>
<div class="t" style="left:363.20px;top:17.25px;font-size:17.6px;line-height:30px;color:#303133;font-weight:normal;letter-spacing:-0.45px">首页</div>
<div class="t" style="left:410.50px;top:17.25px;font-size:17.6px;line-height:30px;color:#c0c4cc;font-weight:normal;">/</div>
<div class="t" style="left:431.50px;top:17.25px;font-size:17.6px;line-height:30px;color:#97a8be;font-weight:normal;letter-spacing:-0.45px">销售管理</div>
<div class="t" style="left:514.00px;top:17.25px;font-size:17.6px;line-height:30px;color:#c0c4cc;font-weight:normal;">/</div>
<div class="t" style="left:534.80px;top:17.25px;font-size:17.6px;line-height:30px;color:#97a8be;font-weight:normal;letter-spacing:-0.45px">客户档案</div>
<div class="t" style="left:2214.00px;top:25.05px;font-size:17.6px;line-height:30px;color:#5a5e66;font-weight:normal;-webkit-text-stroke:0.35px #5a5e66;letter-spacing:-0.6px">操作手册</div>
<svg style="left:2361.9px;top:46px" width="10" height="7"><path d="M0 0H9.4L4.7 6.2Z" fill="#5a5e66"/></svg>
<div class="b" style="left:0.00px;top:0.00px;width:266.00px;height:1650.00px;background:#304156;box-shadow:2px 0 6px rgba(0,21,41,.35)"></div>
<div class="b" style="left:0.00px;top:512.65px;width:266.00px;height:731.50px;background:#1f2d3d"></div>
<svg style="left:22.90px;top:20.30px" width="32.20" height="32.20" viewBox="-16.1 -16.1 32.2 32.2"><circle cx="0" cy="0" r="12.1" fill="#4297ec"/><g fill="none" stroke="#fff" stroke-linecap="round" stroke-linejoin="round"><path d="M-11.6 11.6C-8.5 3 -4.5 -5.5 1.5 -7.5" stroke-width="2.9"/><path d="M1.6 -7.3C0.6 -3.5 -1.6 0.8 -2.5 4" stroke-width="2.3"/><path d="M-2.5 4C0.5 1 4.5 -3 8.3 -5" stroke-width="2.1"/><path d="M8.4 -5C7 -2 5.2 1.2 4.4 3.5" stroke-width="2"/><path d="M2 5.2L0.8 7" stroke-width="1.1"/><path d="M-14 7.2L-8.6 0.6M-13.6 10.6L-11.2 7.4M-12.6 13.4L-10.6 10.6" stroke-width="0.8"/></g></svg>
<div class="t" style="left:66.50px;top:22.55px;font-size:17px;line-height:30px;color:#fff;font-weight:600;">升阳云ERP</div>
<svg style="left:26px;top:94.35px" width="18" height="18" viewBox="0 0 18 18"><rect x="0" y="8" width="4.5" height="10" fill="#bfcbd9"/><rect x="6.6" y="0" width="4.8" height="18" fill="#bfcbd9"/><rect x="13.5" y="4.5" width="4.5" height="13.5" fill="#bfcbd9"/></svg>
<div class="t" style="left:64.70px;top:89.70px;font-size:17.6px;line-height:30px;color:#bfcbd9;font-weight:normal;letter-spacing:-0.45px">经营总控</div>
<svg style="left:26px;top:168.55px" width="18" height="18" viewBox="0 0 18 18"><path d="M0.5 17.5V3.6L3.8 0.6H12.8V4.5" stroke="#bfcbd9" stroke-width="1" fill="none"/><path d="M0.8 3.8H4V0.8Z" fill="#bfcbd9"/><path d="M3.2 8.6H9.3M3.2 10.5H9.3M3.2 13.6H9.3" stroke="#bfcbd9" stroke-width="0.85"/><circle cx="2.4" cy="8.6" r="0.5" fill="#bfcbd9"/><circle cx="2.4" cy="13.6" r="0.5" fill="#bfcbd9"/><circle cx="13.7" cy="9.9" r="4.1" stroke="#bfcbd9" stroke-width="1" fill="none"/><path d="M12.3 8.4L13.9 10.4L15.3 8.9" stroke="#bfcbd9" stroke-width="0.9" fill="none"/><circle cx="12.4" cy="17.2" r="0.7" fill="#bfcbd9"/></svg>
<div class="t" style="left:64.70px;top:163.90px;font-size:17.6px;line-height:30px;color:#bfcbd9;font-weight:normal;letter-spacing:-0.45px">流程管理</div>
<svg style="left:0px;top:0px" width="1" height="1"><path d="M227.5 172.85L232.8 177.85L238.1 172.85" stroke="#909399" stroke-width="1.15" fill="none"/></svg>
<svg style="left:26px;top:242.75px" width="18" height="18" viewBox="0 0 18 18"><path d="M3.6 3.2V0.5H16.6V17.5H3.6V13.6" stroke="#bfcbd9" stroke-width="1" fill="none"/><path d="M1.6 5.4H4.6M1.6 8.6H4.6M1.6 11.5H4.6" stroke="#bfcbd9" stroke-width="1" opacity="0.8"/><circle cx="10" cy="8.6" r="4" stroke="#bfcbd9" stroke-width="1" fill="none"/><path d="M9.3 7V9.6L11 10.2" stroke="#bfcbd9" stroke-width="0.8" fill="none"/></svg>
<div class="t" style="left:64.70px;top:238.10px;font-size:17.6px;line-height:30px;color:#bfcbd9;font-weight:normal;letter-spacing:-0.45px">办公管理</div>
<svg style="left:0px;top:0px" width="1" height="1"><path d="M227.5 247.05L232.8 252.05L238.1 247.05" stroke="#909399" stroke-width="1.15" fill="none"/></svg>
<svg style="left:26px;top:315.95px" width="18" height="18" viewBox="0 0 18 18"><path d="M0 2.6L9.4 0.3V18L0 15.6Z" fill="#bfcbd9"/><path d="M11 2.3H18V16H11Z" fill="#bfcbd9"/><path d="M12.3 4.3H16.7M12.3 6.6H16.7M12.3 8.9H16.7M12.3 11.2H16.7M12.3 13.5H16.7" stroke="#304156" stroke-width="0.75"/></svg>
<div class="t" style="left:64.70px;top:312.30px;font-size:17.6px;line-height:30px;color:#bfcbd9;font-weight:normal;letter-spacing:-0.45px">料品档案</div>
<svg style="left:0px;top:0px" width="1" height="1"><path d="M227.5 321.25L232.8 326.25L238.1 321.25" stroke="#909399" stroke-width="1.15" fill="none"/></svg>
<svg style="left:26px;top:390.15px" width="18" height="18" viewBox="0 0 18 18"><rect x="0" y="0" width="18" height="18" rx="2.2" fill="#bfcbd9"/><path d="M6 3.2H12M9 3.2V14.6M5.6 14.6H12.4" stroke="#304156" stroke-width="1.5"/></svg>
<div class="t" style="left:64.70px;top:386.50px;font-size:17.6px;line-height:30px;color:#bfcbd9;font-weight:normal;letter-spacing:-0.45px">研发管理</div>
<svg style="left:0px;top:0px" width="1" height="1"><path d="M227.5 395.45L232.8 400.45L238.1 395.45" stroke="#909399" stroke-width="1.15" fill="none"/></svg>
<svg style="left:26px;top:464.35px" width="18" height="18" viewBox="0 0 18 18"><path d="M0 1.9H12.2V6.2H7V15.6H0Z" fill="#f4f4f5"/><path d="M0 0.6H11.4" stroke="#f4f4f5" stroke-width="1.2"/><path d="M7.6 6.3H13.8L17.4 9.9V17.4H7.6Z" stroke="#f4f4f5" stroke-width="1.2" fill="#304156"/><path d="M13.3 6.3V10.4H17.4" stroke="#f4f4f5" stroke-width="1.1" fill="none"/></svg>
<div class="t" style="left:64.70px;top:460.70px;font-size:17.6px;line-height:30px;color:#f4f4f5;font-weight:normal;letter-spacing:-0.45px">销售管理</div>
<svg style="left:0px;top:0px" width="1" height="1"><path d="M227.3 476.05L232.8 469.65L238.3 476.05" stroke="#909399" stroke-width="1.15" fill="none"/></svg>
<svg style="left:26px;top:535.80px" width="18" height="18" viewBox="0 0 18 18"><path d="M0 1.4Q0 0 1.4 0H10.3V3.8H14.7V10.6L9.4 16.4L9.1 17.3H1.4Q0 17.3 0 15.9Z" fill="#1890ff"/><path d="M11 0L14.7 3.2H11Z" fill="#1890ff"/><path d="M2.9 8.1H11.8M2.9 12.5H10.6" stroke="#1f2d3d" stroke-width="1.5"/><path d="M10 17.6L15.6 12" stroke="#1890ff" stroke-width="2.2"/><path d="M16.3 11.2L17.4 10.1" stroke="#1890ff" stroke-width="2"/></svg>
<div class="t" style="left:64.70px;top:531.05px;font-size:17.6px;line-height:30px;color:#1890ff;font-weight:normal;letter-spacing:-0.45px">客户档案</div>
<svg style="left:26px;top:602.30px" width="18" height="18" viewBox="0 0 18 18"><path d="M0 1.4Q0 0 1.4 0H10.3V3.8H14.7V10.6L9.4 16.4L9.1 17.3H1.4Q0 17.3 0 15.9Z" fill="#bfcbd9"/><path d="M11 0L14.7 3.2H11Z" fill="#bfcbd9"/><path d="M2.9 8.1H11.8M2.9 12.5H10.6" stroke="#1f2d3d" stroke-width="1.5"/><path d="M10 17.6L15.6 12" stroke="#bfcbd9" stroke-width="2.2"/><path d="M16.3 11.2L17.4 10.1" stroke="#bfcbd9" stroke-width="2"/></svg>
<div class="t" style="left:64.70px;top:597.55px;font-size:17.6px;line-height:30px;color:#bfcbd9;font-weight:normal;letter-spacing:-0.45px">销售合同</div>
<svg style="left:26.5px;top:671.30px" width="17" height="15" viewBox="0 0 17 15"><rect x="0.95" y="0.95" width="15.05" height="12.5" rx="1.2" stroke="#bfcbd9" stroke-width="1" fill="none"/><path d="M0.95 4.6H16M0.95 8.4H16M6.45 4.6V13.45M11.45 4.6V13.45" stroke="#bfcbd9" stroke-width="0.95"/></svg>
<div class="t" style="left:64.70px;top:664.05px;font-size:17.6px;line-height:30px;color:#bfcbd9;font-weight:normal;letter-spacing:-0.45px">销售订单</div>
<svg style="left:26px;top:735.90px" width="18" height="18" viewBox="0 0 18 18"><rect x="0" y="8" width="4.5" height="10" fill="#bfcbd9"/><rect x="6.6" y="0" width="4.8" height="18" fill="#bfcbd9"/><rect x="13.5" y="4.5" width="4.5" height="13.5" fill="#bfcbd9"/></svg>
<div class="t" style="left:64.70px;top:730.55px;font-size:17.6px;line-height:30px;color:#bfcbd9;font-weight:normal;letter-spacing:-0.45px">订单进度图</div>
<svg style="left:26.5px;top:804.30px" width="17" height="15" viewBox="0 0 17 15"><rect x="0.95" y="0.95" width="15.05" height="12.5" rx="1.2" stroke="#bfcbd9" stroke-width="1" fill="none"/><path d="M0.95 4.6H16M0.95 8.4H16M6.45 4.6V13.45M11.45 4.6V13.45" stroke="#bfcbd9" stroke-width="0.95"/></svg>
<div class="t" style="left:64.70px;top:797.05px;font-size:17.6px;line-height:30px;color:#bfcbd9;font-weight:normal;letter-spacing:-0.45px">备货订单</div>
<svg style="left:26.5px;top:870.80px" width="17" height="15" viewBox="0 0 17 15"><rect x="0.95" y="0.95" width="15.05" height="12.5" rx="1.2" stroke="#bfcbd9" stroke-width="1" fill="none"/><path d="M0.95 4.6H16M0.95 8.4H16M6.45 4.6V13.45M11.45 4.6V13.45" stroke="#bfcbd9" stroke-width="0.95"/></svg>
<div class="t" style="left:64.70px;top:863.55px;font-size:17.6px;line-height:30px;color:#bfcbd9;font-weight:normal;letter-spacing:-0.45px">发货通知单</div>
<svg style="left:26.5px;top:937.30px" width="17" height="15" viewBox="0 0 17 15"><rect x="0.95" y="0.95" width="15.05" height="12.5" rx="1.2" stroke="#bfcbd9" stroke-width="1" fill="none"/><path d="M0.95 4.6H16M0.95 8.4H16M6.45 4.6V13.45M11.45 4.6V13.45" stroke="#bfcbd9" stroke-width="0.95"/></svg>
<div class="t" style="left:64.70px;top:930.05px;font-size:17.6px;line-height:30px;color:#bfcbd9;font-weight:normal;letter-spacing:-0.45px">开票结算单</div>
<svg style="left:26.5px;top:1003.80px" width="17" height="15" viewBox="0 0 17 15"><rect x="0.95" y="0.95" width="15.05" height="12.5" rx="1.2" stroke="#bfcbd9" stroke-width="1" fill="none"/><path d="M0.95 4.6H16M0.95 8.4H16M6.45 4.6V13.45M11.45 4.6V13.45" stroke="#bfcbd9" stroke-width="0.95"/></svg>
<div class="t" style="left:64.70px;top:996.55px;font-size:17.6px;line-height:30px;color:#bfcbd9;font-weight:normal;letter-spacing:-0.45px">退货通知单</div>
<svg style="left:26px;top:1068.40px" width="18" height="18" viewBox="0 0 18 18"><path d="M0.6 1.2H8L9 2L10 1.2H17.4V16.2H10L9 17L8 16.2H0.6Z" stroke="#bfcbd9" stroke-width="1.1" fill="none"/><path d="M9 2V17M8.2 2V16.2" stroke="#bfcbd9" stroke-width="0.9"/></svg>
<div class="t" style="left:64.70px;top:1063.05px;font-size:17.6px;line-height:30px;color:#bfcbd9;font-weight:normal;letter-spacing:-0.45px">销售订单计划表</div>
<svg style="left:26px;top:1134.90px" width="18" height="18" viewBox="0 0 18 18"><path d="M0.6 1.2H8L9 2L10 1.2H17.4V16.2H10L9 17L8 16.2H0.6Z" stroke="#bfcbd9" stroke-width="1.1" fill="none"/><path d="M9 2V17M8.2 2V16.2" stroke="#bfcbd9" stroke-width="0.9"/></svg>
<div class="t" style="left:64.70px;top:1129.55px;font-size:17.6px;line-height:30px;color:#bfcbd9;font-weight:normal;letter-spacing:-0.45px">销售订单明细表</div>
<svg style="left:26px;top:1201.40px" width="18" height="18" viewBox="0 0 18 18"><path d="M0.6 1.2H8L9 2L10 1.2H17.4V16.2H10L9 17L8 16.2H0.6Z" stroke="#bfcbd9" stroke-width="1.1" fill="none"/><path d="M9 2V17M8.2 2V16.2" stroke="#bfcbd9" stroke-width="0.9"/></svg>
<div class="t" style="left:64.70px;top:1196.05px;font-size:17.6px;line-height:30px;color:#bfcbd9;font-weight:normal;letter-spacing:-0.45px">7天交货明细表</div>
<svg style="left:26px;top:1271.05px" width="18" height="18" viewBox="0 0 18 18"><rect x="0" y="8" width="4.5" height="10" fill="#bfcbd9"/><rect x="6.6" y="0" width="4.8" height="18" fill="#bfcbd9"/><rect x="13.5" y="4.5" width="4.5" height="13.5" fill="#bfcbd9"/></svg>
<div class="t" style="left:64.70px;top:1266.40px;font-size:17.6px;line-height:30px;color:#bfcbd9;font-weight:normal;letter-spacing:-0.45px">销售报表</div>
<svg style="left:0px;top:0px" width="1" height="1"><path d="M227.5 1275.35L232.8 1280.35L238.1 1275.35" stroke="#909399" stroke-width="1.15" fill="none"/></svg>
<svg style="left:26px;top:1344.25px" width="18" height="18" viewBox="0 0 18 18"><path d="M0 1.9H12.2V6.2H7V15.6H0Z" fill="#bfcbd9"/><path d="M0 0.6H11.4" stroke="#bfcbd9" stroke-width="1.2"/><path d="M7.6 6.3H13.8L17.4 9.9V17.4H7.6Z" stroke="#bfcbd9" stroke-width="1.2" fill="#304156"/><path d="M13.3 6.3V10.4H17.4" stroke="#bfcbd9" stroke-width="1.1" fill="none"/></svg>
<div class="t" style="left:64.70px;top:1340.60px;font-size:17.6px;line-height:30px;color:#bfcbd9;font-weight:normal;letter-spacing:-0.45px">生产计划</div>
<svg style="left:0px;top:0px" width="1" height="1"><path d="M227.5 1349.55L232.8 1354.55L238.1 1349.55" stroke="#909399" stroke-width="1.15" fill="none"/></svg>
<svg style="left:26px;top:1418.45px" width="18" height="18" viewBox="0 0 18 18"><path d="M0 1.9H12.2V6.2H7V15.6H0Z" fill="#bfcbd9"/><path d="M0 0.6H11.4" stroke="#bfcbd9" stroke-width="1.2"/><path d="M7.6 6.3H13.8L17.4 9.9V17.4H7.6Z" stroke="#bfcbd9" stroke-width="1.2" fill="#304156"/><path d="M13.3 6.3V10.4H17.4" stroke="#bfcbd9" stroke-width="1.1" fill="none"/></svg>
<div class="t" style="left:64.70px;top:1414.80px;font-size:17.6px;line-height:30px;color:#bfcbd9;font-weight:normal;letter-spacing:-0.45px">采购管理</div>
<svg style="left:0px;top:0px" width="1" height="1"><path d="M227.5 1423.75L232.8 1428.75L238.1 1423.75" stroke="#909399" stroke-width="1.15" fill="none"/></svg>
<svg style="left:25.5px;top:1493.15px" width="19" height="19" viewBox="0 0 19 19"><path d="M18.80 9.50 L18.70 10.10 L18.42 10.67 L17.99 11.19 L17.47 11.64 L16.93 12.02 L16.44 12.37 L16.03 12.72 L15.74 13.10 L15.55 13.54 L15.46 14.07 L15.40 14.67 L15.33 15.33 L15.20 16.00 L14.97 16.63 L14.62 17.17 L14.15 17.55 L13.58 17.77 L12.94 17.81 L12.28 17.69 L11.64 17.47 L11.03 17.20 L10.48 16.94 L9.98 16.76 L9.50 16.70 L9.02 16.76 L8.52 16.94 L7.97 17.20 L7.36 17.47 L6.72 17.69 L6.06 17.81 L5.42 17.77 L4.85 17.55 L4.38 17.17 L4.03 16.63 L3.80 16.00 L3.67 15.33 L3.60 14.67 L3.54 14.07 L3.45 13.54 L3.26 13.10 L2.97 12.72 L2.56 12.37 L2.07 12.02 L1.53 11.64 L1.01 11.19 L0.58 10.67 L0.30 10.10 L0.20 9.50 L0.30 8.90 L0.58 8.33 L1.01 7.81 L1.53 7.36 L2.07 6.98 L2.56 6.63 L2.97 6.28 L3.26 5.90 L3.45 5.46 L3.54 4.93 L3.60 4.33 L3.67 3.67 L3.80 3.00 L4.03 2.37 L4.38 1.83 L4.85 1.45 L5.42 1.23 L6.06 1.19 L6.72 1.31 L7.36 1.53 L7.97 1.80 L8.52 2.06 L9.02 2.24 L9.50 2.30 L9.98 2.24 L10.48 2.06 L11.03 1.80 L11.64 1.53 L12.28 1.31 L12.94 1.19 L13.58 1.23 L14.15 1.45 L14.62 1.83 L14.97 2.37 L15.20 3.00 L15.33 3.67 L15.40 4.33 L15.46 4.93 L15.55 5.46 L15.74 5.90 L16.03 6.28 L16.44 6.63 L16.93 6.98 L17.47 7.36 L17.99 7.81 L18.42 8.33 L18.70 8.90 L18.80 9.50Z" fill="#c6c6c6"/><circle cx="9.5" cy="9.5" r="3.5" fill="#304156"/></svg>
<div class="t" style="left:64.70px;top:1489.00px;font-size:17.6px;line-height:30px;color:#bfcbd9;font-weight:normal;letter-spacing:-0.45px">车间设置</div>
<svg style="left:0px;top:0px" width="1" height="1"><path d="M227.5 1497.95L232.8 1502.95L238.1 1497.95" stroke="#909399" stroke-width="1.15" fill="none"/></svg>
<svg style="left:26px;top:1566.85px" width="18" height="18" viewBox="0 0 18 18"><path d="M0 1.9H12.2V6.2H7V15.6H0Z" fill="#bfcbd9"/><path d="M0 0.6H11.4" stroke="#bfcbd9" stroke-width="1.2"/><path d="M7.6 6.3H13.8L17.4 9.9V17.4H7.6Z" stroke="#bfcbd9" stroke-width="1.2" fill="#304156"/><path d="M13.3 6.3V10.4H17.4" stroke="#bfcbd9" stroke-width="1.1" fill="none"/></svg>
<div class="t" style="left:64.70px;top:1563.20px;font-size:17.6px;line-height:30px;color:#bfcbd9;font-weight:normal;letter-spacing:-0.45px">生产管理</div>
<svg style="left:0px;top:0px" width="1" height="1"><path d="M227.5 1572.15L232.8 1577.15L238.1 1572.15" stroke="#909399" stroke-width="1.15" fill="none"/></svg>
<svg style="left:26px;top:1641.05px" width="18" height="18" viewBox="0 0 18 18"><path d="M0 1.9H12.2V6.2H7V15.6H0Z" fill="#bfcbd9"/><path d="M0 0.6H11.4" stroke="#bfcbd9" stroke-width="1.2"/><path d="M7.6 6.3H13.8L17.4 9.9V17.4H7.6Z" stroke="#bfcbd9" stroke-width="1.2" fill="#304156"/><path d="M13.3 6.3V10.4H17.4" stroke="#bfcbd9" stroke-width="1.1" fill="none"/></svg>
<div class="t" style="left:64.70px;top:1637.40px;font-size:17.6px;line-height:30px;color:#bfcbd9;font-weight:normal;letter-spacing:-0.45px">加工车间</div>
<svg style="left:0px;top:0px" width="1" height="1"><path d="M227.5 1646.35L232.8 1651.35L238.1 1646.35" stroke="#909399" stroke-width="1.15" fill="none"/></svg>
<svg style="left:2304.45px;top:13.25px" width="46.30" height="46.30" viewBox="-16.1 -16.1 32.2 32.2"><circle cx="0" cy="0" r="12.1" fill="#4297ec"/><g fill="none" stroke="#fff" stroke-linecap="round" stroke-linejoin="round"><path d="M-11.6 11.6C-8.5 3 -4.5 -5.5 1.5 -7.5" stroke-width="2.9"/><path d="M1.6 -7.3C0.6 -3.5 -1.6 0.8 -2.5 4" stroke-width="2.3"/><path d="M-2.5 4C0.5 1 4.5 -3 8.3 -5" stroke-width="2.1"/><path d="M8.4 -5C7 -2 5.2 1.2 4.4 3.5" stroke-width="2"/><path d="M2 5.2L0.8 7" stroke-width="1.1"/><path d="M-14 7.2L-8.6 0.6M-13.6 10.6L-11.2 7.4M-12.6 13.4L-10.6 10.6" stroke-width="0.8"/></g></svg>
<div class="b" style="left:659.50px;top:98.50px;width:1080.50px;height:1119.50px;background:#fff;border-radius:3px;box-shadow:0 1.33px 4px rgba(0,0,0,.3)"></div>
<div class="t" style="left:686.00px;top:147.65px;font-size:20px;line-height:30px;color:#303133;font-weight:normal;">客户</div>
<svg style="left:1697.8px;top:130px" width="14" height="14"><path d="M0.6 0.6L12.1 12.1M12.1 0.6L0.6 12.1" stroke="#909399" stroke-width="1.3"/></svg>
<div class="t" style="left:589.70px;width:200px;text-align:right;top:205.65px;font-size:17.6px;line-height:30px;color:#606266;font-weight:normal;">客户名称</div>
<div class="t" style="left:705.00px;top:207.15px;font-size:19px;line-height:30px;color:#f56c6c;font-weight:normal;">*</div>
<div class="b" style="left:806.30px;top:199.20px;width:900.10px;height:43.40px;box-shadow:inset 0 0 0 1.7px #d9dce3;border-radius:5px;background:#fff"></div>
<div class="t" style="left:589.70px;width:200px;text-align:right;top:261.98px;font-size:17.6px;line-height:30px;color:#606266;font-weight:normal;">客户别名</div>
<div class="b" style="left:806.30px;top:255.53px;width:900.10px;height:43.40px;box-shadow:inset 0 0 0 1.7px #d9dce3;border-radius:5px;background:#fff"></div>
<div class="t" style="left:589.70px;width:200px;text-align:right;top:318.31px;font-size:17.6px;line-height:30px;color:#606266;font-weight:normal;">简称</div>
<div class="b" style="left:806.30px;top:311.86px;width:382.90px;height:43.40px;box-shadow:inset 0 0 0 1.7px #d9dce3;border-radius:5px;background:#fff"></div>
<div class="t" style="left:1106.20px;width:200px;text-align:right;top:318.31px;font-size:17.6px;line-height:30px;color:#606266;font-weight:normal;">所属省/市</div>
<div class="b" style="left:1323.60px;top:311.86px;width:382.80px;height:43.40px;box-shadow:inset 0 0 0 1.7px #d9dce3;border-radius:5px;background:#fff"></div>
<div class="t" style="left:1345.90px;top:318.31px;font-size:17.6px;line-height:30px;color:#c0c4cc;font-weight:normal;">请选择</div>
<svg style="left:1675.90px;top:328.56px" width="14" height="8"><path d="M0.7 0.8L6.75 6.9L12.8 0.8" stroke="#c0c4cc" stroke-width="1.1" fill="none"/></svg>
<div class="t" style="left:589.70px;width:200px;text-align:right;top:374.64px;font-size:17.6px;line-height:30px;color:#606266;font-weight:normal;">公司地址</div>
<div class="b" style="left:806.30px;top:368.19px;width:900.10px;height:43.40px;box-shadow:inset 0 0 0 1.7px #d9dce3;border-radius:5px;background:#fff"></div>
<div class="t" style="left:589.70px;width:200px;text-align:right;top:430.97px;font-size:17.6px;line-height:30px;color:#606266;font-weight:normal;">邮编</div>
<div class="b" style="left:806.30px;top:424.52px;width:382.90px;height:43.40px;box-shadow:inset 0 0 0 1.7px #d9dce3;border-radius:5px;background:#fff"></div>
<div class="t" style="left:1106.20px;width:200px;text-align:right;top:430.97px;font-size:17.6px;line-height:30px;color:#606266;font-weight:normal;">电话</div>
<div class="b" style="left:1323.60px;top:424.52px;width:382.80px;height:43.40px;box-shadow:inset 0 0 0 1.7px #d9dce3;border-radius:5px;background:#fff"></div>
<div class="t" style="left:589.70px;width:200px;text-align:right;top:487.30px;font-size:17.6px;line-height:30px;color:#606266;font-weight:normal;">信用等级</div>
<div class="b" style="left:806.30px;top:480.85px;width:382.90px;height:43.40px;box-shadow:inset 0 0 0 1.7px #d9dce3;border-radius:5px;background:#fff"></div>
<div class="t" style="left:828.60px;top:487.30px;font-size:17.6px;line-height:30px;color:#c0c4cc;font-weight:normal;">请选择</div>
<svg style="left:1158.70px;top:497.55px" width="14" height="8"><path d="M0.7 0.8L6.75 6.9L12.8 0.8" stroke="#c0c4cc" stroke-width="1.1" fill="none"/></svg>
<div class="t" style="left:1106.20px;width:200px;text-align:right;top:487.30px;font-size:17.6px;line-height:30px;color:#606266;font-weight:normal;">信用额度</div>
<div class="b" style="left:1323.60px;top:480.85px;width:382.80px;height:43.40px;box-shadow:inset 0 0 0 1.7px #d9dce3;border-radius:5px;background:#fff"></div>
<div class="t" style="left:589.70px;width:200px;text-align:right;top:543.63px;font-size:17.6px;line-height:30px;color:#606266;font-weight:normal;">客户分类</div>
<div class="b" style="left:806.30px;top:537.18px;width:382.90px;height:43.40px;box-shadow:inset 0 0 0 1.7px #d9dce3;border-radius:5px;background:#fff"></div>
<div class="t" style="left:828.60px;top:543.63px;font-size:17.6px;line-height:30px;color:#c0c4cc;font-weight:normal;">请选择</div>
<svg style="left:1158.70px;top:553.88px" width="14" height="8"><path d="M0.7 0.8L6.75 6.9L12.8 0.8" stroke="#c0c4cc" stroke-width="1.1" fill="none"/></svg>
<div class="t" style="left:1106.20px;width:200px;text-align:right;top:543.63px;font-size:17.6px;line-height:30px;color:#606266;font-weight:normal;">备注</div>
<div class="b" style="left:1323.60px;top:537.18px;width:382.80px;height:43.40px;box-shadow:inset 0 0 0 1.7px #d9dce3;border-radius:5px;background:#fff"></div>
<div class="t" style="left:589.70px;width:200px;text-align:right;top:598.75px;font-size:17.6px;line-height:30px;color:#606266;font-weight:normal;">状态</div>
<div class="b" style="left:806.00px;top:605.00px;width:18.00px;height:18.00px;background:#1890ff;border-radius:9px"></div>
<div class="b" style="left:812.00px;top:611.00px;width:6.00px;height:6.00px;background:#fff;border-radius:3px"></div>
<div class="t" style="left:832.00px;top:598.75px;font-size:17.6px;line-height:30px;color:#1890ff;font-weight:normal;">正常</div>
<div class="b" style="left:890.00px;top:605.00px;width:18.00px;height:18.00px;border:1px solid #dcdfe6;border-radius:9px;background:#fff"></div>
<div class="t" style="left:915.80px;top:598.75px;font-size:17.6px;line-height:30px;color:#606266;font-weight:normal;">停用</div>
<div class="b" style="left:697.90px;top:659.70px;width:1008.90px;height:433.10px;background:#fff;border-radius:6px;box-shadow:0 2px 12px 0 rgba(0,0,0,.1)"></div>
<div class="t" style="left:719.20px;top:691.65px;font-size:17.6px;line-height:30px;color:#1890ff;font-weight:normal;-webkit-text-stroke:0.3px #1890ff">开票信息</div>
<div class="t" style="left:842.40px;top:691.65px;font-size:17.6px;line-height:30px;color:#303133;font-weight:normal;-webkit-text-stroke:0.3px #303133">业务联系人</div>
<div class="t" style="left:982.80px;top:691.65px;font-size:17.6px;line-height:30px;color:#303133;font-weight:normal;-webkit-text-stroke:0.3px #303133">财务联系人</div>
<div class="b" style="left:719.20px;top:730.60px;width:966.50px;height:3.40px;background:#e1e5ec"></div>
<div class="b" style="left:719.20px;top:730.60px;width:71.70px;height:3.40px;background:#1890ff"></div>
<div class="t" style="left:622.20px;width:200px;text-align:right;top:761.55px;font-size:17.6px;line-height:30px;color:#606266;font-weight:normal;">开户行</div>
<div class="b" style="left:839.70px;top:755.80px;width:832.70px;height:42.00px;box-shadow:inset 0 0 0 1.7px #d9dce3;border-radius:5px;background:#fff"></div>
<div class="t" style="left:622.20px;width:200px;text-align:right;top:817.95px;font-size:17.6px;line-height:30px;color:#606266;font-weight:normal;">地址电话</div>
<div class="b" style="left:839.70px;top:812.20px;width:832.70px;height:42.00px;box-shadow:inset 0 0 0 1.7px #d9dce3;border-radius:5px;background:#fff"></div>
<div class="t" style="left:622.20px;width:200px;text-align:right;top:874.35px;font-size:17.6px;line-height:30px;color:#606266;font-weight:normal;">账号</div>
<div class="b" style="left:839.70px;top:868.60px;width:832.70px;height:42.00px;box-shadow:inset 0 0 0 1.7px #d9dce3;border-radius:5px;background:#fff"></div>
<div class="t" style="left:622.20px;width:200px;text-align:right;top:930.75px;font-size:17.6px;line-height:30px;color:#606266;font-weight:normal;">税号</div>
<div class="b" style="left:839.70px;top:925.00px;width:832.70px;height:42.00px;box-shadow:inset 0 0 0 1.7px #d9dce3;border-radius:5px;background:#fff"></div>
<div class="b" style="left:1515.30px;top:1150.00px;width:90.60px;height:42.60px;background:#1890ff;border-radius:5px"></div>
<div class="t" style="left:1515.60px;width:90px;text-align:center;top:1156.05px;font-size:17.5px;line-height:30px;color:#fff;font-weight:normal;">确定</div>
<div class="b" style="left:1618.00px;top:1150.00px;width:95.40px;height:42.60px;box-shadow:inset 0 0 0 1.7px #d9dce3;border-radius:5px;background:#fff"></div>
<div class="t" style="left:1618.20px;width:95px;text-align:center;top:1156.05px;font-size:17.5px;line-height:30px;color:#606266;font-weight:normal;">取 消</div>
</body></html>
